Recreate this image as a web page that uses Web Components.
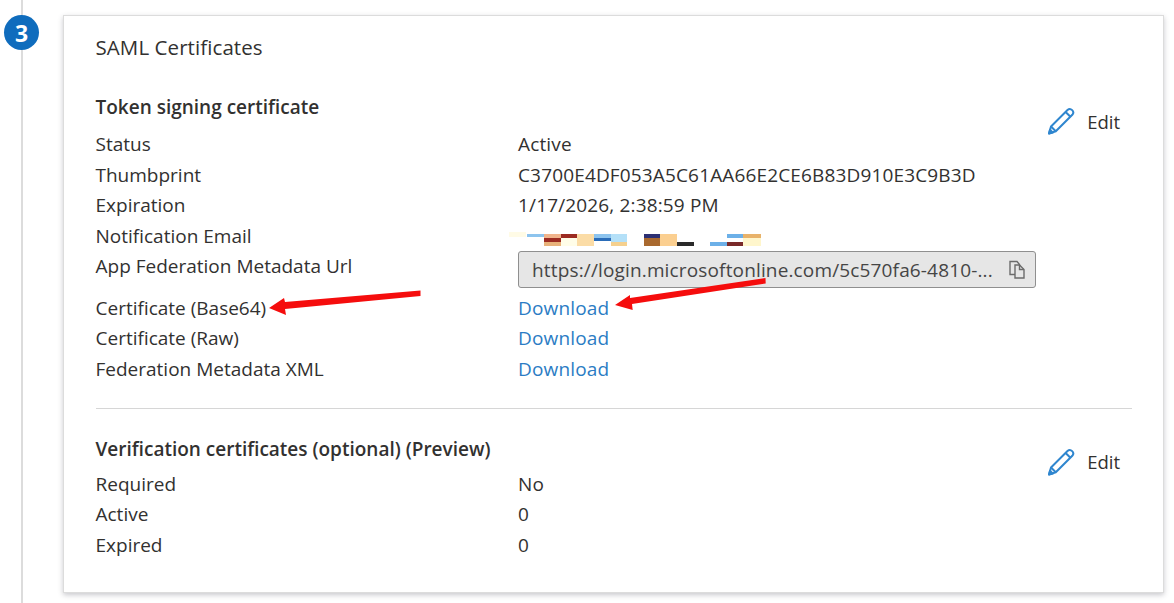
<!DOCTYPE html>
<html>
<head>
<meta charset="utf-8">
<style>
  html, body { margin: 0; height: 603px; overflow: hidden; background: #fff; }
  body { font-family: "Open Sans", "Noto Sans", sans-serif; color: #323130; }
</style>
</head>
<body>
<saml-step number="3">
  <saml-card>
    <span slot="title">SAML Certificates</span>
    <cert-section heading="Token signing certificate" edit-top="13">
      <info-row label="Status">Active</info-row>
      <info-row label="Thumbprint">C3700E4DF053A5C61AA66E2CE6B83D910E3C9B3D</info-row>
      <info-row label="Expiration">1/17/2026, 2:38:59 PM</info-row>
      <info-row label="Notification Email"><redacted-mail></redacted-mail></info-row>
      <info-row label="App Federation Metadata Url" tall><copy-field>https://login.microsoftonline.com/5c570fa6-4810-...</copy-field></info-row>
      <info-row label="Certificate (Base64)"><link-text>Download</link-text></info-row>
      <info-row label="Certificate (Raw)"><link-text>Download</link-text></info-row>
      <info-row label="Federation Metadata XML"><link-text>Download</link-text></info-row>
    </cert-section>
    <cert-section heading="Verification certificates (optional) (Preview)" edit-top="12" second>
      <info-row label="Required">No</info-row>
      <info-row label="Active">0</info-row>
      <info-row label="Expired">0</info-row>
    </cert-section>
  </saml-card>
</saml-step>
<red-arrows></red-arrows>

<script>
class SamlStep extends HTMLElement {
  constructor() {
    super();
    const n = this.getAttribute('number');
    this.attachShadow({mode: 'open'}).innerHTML = `
      <style>
        :host { display: flex; height: 603px; box-sizing: border-box; padding-top: 15px; }
        .rail { position: relative; width: 63px; flex: none; margin-top: -15px; }
        .line { position: absolute; left: 21px; top: 0; bottom: 0; width: 2px; background: #dcdcdc; }
        .badge {
          position: absolute; left: 4px; top: 15px; width: 35px; height: 35px; border-radius: 50%;
          background: #0f6cbd; color: #fff; font-weight: 700; font-size: 23px;
          display: flex; align-items: center; justify-content: center;
        }
      </style>
      <div class="rail"><div class="line"></div><div class="badge">${n}</div></div>
      <slot></slot>`;
  }
}

class SamlCard extends HTMLElement {
  constructor() {
    super();
    this.attachShadow({mode: 'open'}).innerHTML = `
      <style>
        :host {
          display: block; box-sizing: border-box; width: 1101px; height: 578px;
          border: 1px solid #dcdcdc; background: #fff; padding: 0 31px 0 31.5px;
          box-shadow: 0 2px 5px rgba(60, 60, 80, .28);
        }
        .title { font-size: 20.5px; line-height: 30px; margin: 16px 0 31px; letter-spacing: .08px; }
      </style>
      <div class="title"><slot name="title"></slot></div>
      <slot></slot>`;
  }
}

class CertSection extends HTMLElement {
  constructor() {
    super();
    const second = this.hasAttribute('second');
    this.attachShadow({mode: 'open'}).innerHTML = `
      <style>
        :host { display: flex; ${second ? 'border-top: 1px solid #d6d6d6; margin-top: 23.4px; padding-top: 26px;' : ''} }
        .body { flex: 1; }
        h3 { margin: 0 0 ${second ? 5.6 : 7.6}px; font-size: 19px; line-height: 28px; font-weight: 600; letter-spacing: 0; }
        .edit {
          flex: none; display: flex; align-items: center; gap: 12px; height: 30px;
          padding-right: 12px; margin-top: ${this.getAttribute('edit-top')}px; font-size: 18.5px;
        }
        svg { width: 28px; height: 28px; display: block; }
      </style>
      <div class="body"><h3>${this.getAttribute('heading')}</h3><slot></slot></div>
      <div class="edit">
        <svg viewBox="0 0 28 28" fill="none" stroke="#2f86cf" stroke-width="2" stroke-linejoin="round">
          <path d="M2 26.5 4 19.5 20.5 3a3.4 3.4 0 0 1 4.8 4.8L8.8 24.3Z"/>
          <path d="M4 19.5 8.8 24.3M18.6 5 23.4 9.8"/>
          <path d="M2 26.5 3 22.8 5.8 25.6Z" fill="#2f86cf"/>
        </svg>
        <span>Edit</span>
      </div>`;
  }
}

class InfoRow extends HTMLElement {
  constructor() {
    super();
    this.attachShadow({mode: 'open'}).innerHTML = `
      <style>
        :host {
          display: grid; grid-template-columns: 422.5px 1fr; align-items: center;
          height: 30.7px; font-size: 19px; letter-spacing: .15px; white-space: nowrap;
        }
        .label { letter-spacing: 0; }
        :host([tall]) { height: 41px; align-items: start; padding-top: 0; }
        :host([tall]) .label { line-height: 30px; }
      </style>
      <div class="label">${this.getAttribute('label')}</div>
      <div><slot></slot></div>`;
  }
}

class LinkText extends HTMLElement {
  constructor() {
    super();
    this.attachShadow({mode: 'open'}).innerHTML = `
      <style>:host { display: inline; color: #2b7cc4; cursor: pointer; }</style><slot></slot>`;
  }
}

class CopyField extends HTMLElement {
  constructor() {
    super();
    this.attachShadow({mode: 'open'}).innerHTML = `
      <style>
        :host {
          display: flex; align-items: center; justify-content: space-between; box-sizing: border-box;
          width: 518px; height: 37px; margin-top: 0; padding: 0 9px 0 13px;
          background: #e6e6e6; border: 1px solid #8f8f8f; border-radius: 3px; color: #454545;
        }
        svg { width: 18px; height: 19px; flex: none; }
      </style>
      <span><slot></slot></span>
      <svg viewBox="0 0 18 19" fill="none" stroke="#6b6b6b" stroke-width="1.4">
        <path d="M2 1.5h7l2.5 3v10H2Z"/>
        <path d="M7 5h4.5l4.5 4.5v8.5H7Z" fill="#e6e6e6"/>
        <path d="M11.5 5v4.5H16"/>
      </svg>`;
  }
}

class RedactedMail extends HTMLElement {
  constructor() {
    super();
    const blocks = [
      [9,0,17,5,'#fffbe6'],[27,2,17,3,'#8dc4ee'],[44,2,17,4,'#f0b48c'],[44,6,17,4,'#9c2b22'],[44,10,17,4,'#e8b27a'],
      [61,2,16,4,'#9c2b22'],[61,6,16,8,'#fffde8'],[77,2,17,12,'#fbdca6'],[94,2,17,4,'#8dc4ee'],[94,6,17,3,'#2a6cb8'],
      [111,2,16,8,'#b4e0f8'],[111,10,16,4,'#f5d08e'],[144,2,16,4,'#2c2f73'],[144,6,16,8,'#a9692f'],[160,2,17,12,'#fbcf90'],
      [177,10,17,4,'#2a2a2a'],[210,10,17,4,'#6cb0e8'],[227,2,16,4,'#6cb0e8'],[227,10,16,4,'#7a2a2a'],[243,2,18,4,'#e8b26a'],[243,6,18,8,'#fff6cc']
    ];
    this.attachShadow({mode: 'open'}).innerHTML = `
      <style>:host { display: block; } svg { display: block; width: 270px; height: 16px; margin-left: -18px; margin-top: 7px; }</style>
      <svg viewBox="0 0 270 16">${blocks.map(b => `<rect x="${b[0]}" y="${b[1]}" width="${b[2]}" height="${b[3]}" fill="${b[4]}"/>`).join('')}</svg>`;
  }
}

class RedArrows extends HTMLElement {
  constructor() {
    super();
    this.attachShadow({mode: 'open'}).innerHTML = `
      <style>:host { position: absolute; left: 0; top: 0; width: 1174px; height: 603px; pointer-events: none; } svg { display: block; }</style>
      <svg width="1174" height="603" viewBox="0 0 1174 603" fill="#f50d0d">
        <path d="M420.500 290.500 285 302 284 298 269 308 286 315 285 309 420.500 296Z"/>
        <path d="M765.500 278 630 298 630 295 615 305 632.700 310 632 304 765.700 283.500Z"/>
      </svg>`;
  }
}

customElements.define('saml-step', SamlStep);
customElements.define('saml-card', SamlCard);
customElements.define('cert-section', CertSection);
customElements.define('info-row', InfoRow);
customElements.define('link-text', LinkText);
customElements.define('copy-field', CopyField);
customElements.define('redacted-mail', RedactedMail);
customElements.define('red-arrows', RedArrows);
</script>
</body>
</html>
